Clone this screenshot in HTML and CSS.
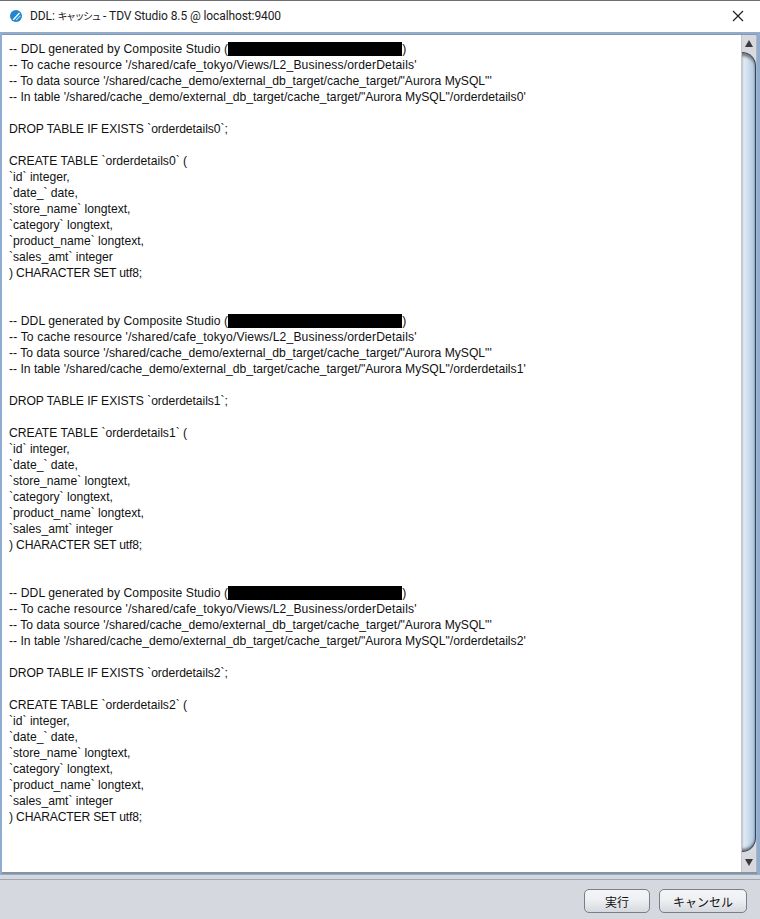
FILE: index.html
```html
<!DOCTYPE html>
<html lang="ja">
<head>
<meta charset="utf-8">
<title>DDL: キャッシュ - TDV Studio 8.5 @ localhost:9400</title>
<link rel="stylesheet" href="styles.css">
</head>
<body>
<div class="window">
  <header class="titlebar">
    <svg class="app-icon" width="16" height="16" viewBox="0 0 16 16" aria-hidden="true">
      <circle cx="8" cy="8" r="6" fill="#1f86cf"/>
      <path d="M4.5 11.5 L11 4.5 L12 5.5 L6 12 Z" fill="#ffffff"/>
      <path d="M7.5 12 L12.5 7 L12.5 8.2 L8.8 12.3 Z" fill="#bfe0f5"/>
    </svg>
    <span class="title-text">DDL: <span class="kana">キャッシュ</span> - TDV Studio 8.5 @ localhost:9400</span>
    <svg class="close-icon" width="12" height="12" viewBox="0 0 12 12" aria-hidden="true">
      <path d="M1 1 L11 11 M11 1 L1 11" stroke="#1a1a1a" stroke-width="1.1" fill="none"/>
    </svg>
  </header>
  <main class="editor-frame">
    <div class="editor">
<pre class="code"><span class="wide-s">-- DDL generated by Composite Studio (</span><span class="redact"></span>)
<span class="wide">-- To cache resource '/shared/cafe_tokyo/Views/L2_Business/orderDetails'</span>
-- To data source '/shared/cache_demo/external_db_target/cache_target/"Aurora MySQL"'
-- In table '/shared/cache_demo/external_db_target/cache_target/"Aurora MySQL"/orderdetails0'

<span class="tight-s">DROP TABLE IF EXISTS `orderdetails0`;</span>

CREATE TABLE `orderdetails0` (
`id` integer,
`date_` date,
`store_name` longtext,
`category` longtext,
`product_name` longtext,
`sales_amt` integer
<span class="tight">) CHARACTER SET utf8;</span>


<span class="wide-s">-- DDL generated by Composite Studio (</span><span class="redact"></span>)
<span class="wide">-- To cache resource '/shared/cafe_tokyo/Views/L2_Business/orderDetails'</span>
-- To data source '/shared/cache_demo/external_db_target/cache_target/"Aurora MySQL"'
-- In table '/shared/cache_demo/external_db_target/cache_target/"Aurora MySQL"/orderdetails1'

<span class="tight-s">DROP TABLE IF EXISTS `orderdetails1`;</span>

CREATE TABLE `orderdetails1` (
`id` integer,
`date_` date,
`store_name` longtext,
`category` longtext,
`product_name` longtext,
`sales_amt` integer
<span class="tight">) CHARACTER SET utf8;</span>


<span class="wide-s">-- DDL generated by Composite Studio (</span><span class="redact"></span>)
<span class="wide">-- To cache resource '/shared/cafe_tokyo/Views/L2_Business/orderDetails'</span>
-- To data source '/shared/cache_demo/external_db_target/cache_target/"Aurora MySQL"'
-- In table '/shared/cache_demo/external_db_target/cache_target/"Aurora MySQL"/orderdetails2'

<span class="tight-s">DROP TABLE IF EXISTS `orderdetails2`;</span>

CREATE TABLE `orderdetails2` (
`id` integer,
`date_` date,
`store_name` longtext,
`category` longtext,
`product_name` longtext,
`sales_amt` integer
<span class="tight">) CHARACTER SET utf8;</span></pre>
      <div class="scrollbar">
        <div class="scroll-btn"><span class="arrow-up"></span></div>
        <div class="thumb"></div>
        <div class="scroll-btn scroll-btn-down"><span class="arrow-down"></span></div>
      </div>
    </div>
  </main>
  <footer class="actions">
    <button class="btn btn-run" type="button">実行</button>
    <button class="btn btn-cancel" type="button">キャンセル</button>
  </footer>
</div>
</body>
</html>
```
FILE: styles.css
```css
* { box-sizing: border-box; }
html, body { margin: 0; padding: 0; height: 100%; }
body { background: #d6d8e0; overflow: hidden; }
.window {
  width: 760px;
  height: 919px;
  display: flex;
  flex-direction: column;
  background: #d6d8e0;
  font-family: "Liberation Sans", "Noto Sans CJK JP", sans-serif;
}
.titlebar {
  height: 32px;
  flex: none;
  display: flex;
  align-items: center;
  background: #fff;
  border-top: 1px solid #6f6f6f;
  padding: 0 16px 2px 8px;
}
.app-icon { flex: none; }
.title-text {
  margin-left: 6px;
  font-family: Roboto, "Noto Sans CJK JP", sans-serif;
  font-size: 12px;
  letter-spacing: -0.1px;
  color: #1b1b1b;
  flex: 1;
  white-space: nowrap;
}
.kana {
  font-family: "Noto Sans CJK JP", sans-serif;
  font-size: 10px;
  letter-spacing: -1.5px;
}
.close-icon { flex: none; }
.editor-frame {
  flex: none;
  height: 843px;
  background: #8fadd0;
  padding: 2px 3px 1px 2px;
}
.editor {
  height: 100%;
  display: flex;
  background: #fff;
  border-bottom: 2px solid #8c929c;
  border-top: 1px solid #8c98a8;
}
.code {
  flex: 1;
  margin: 0;
  padding: 6px 0 0 7px;
  font-family: "Liberation Sans", sans-serif;
  font-size: 12.15px;
  line-height: 16px;
  color: #111;
  overflow: hidden;
}
.wide { letter-spacing: 0.13px; }
.wide-s { letter-spacing: 0.08px; }
.tight { letter-spacing: -0.18px; }
.tight-s { letter-spacing: -0.07px; }
.redact {
  display: inline-block;
  width: 174px;
  height: 14px;
  background: #000;
  vertical-align: -3px;
}
.scrollbar {
  flex: none;
  width: 16px;
  display: flex;
  flex-direction: column;
  background: #d9dbe0;
  border-left: 1px solid #c4c6cb;
  border-right: 1px solid #b3b6bc;
}
.scroll-btn {
  height: 17px;
  flex: none;
  display: flex;
  align-items: center;
  justify-content: center;
  background: #d8d9de;
}
.scroll-btn-down { height: 20px; }
.arrow-up, .arrow-down {
  width: 0;
  height: 0;
  border-left: 4px solid transparent;
  border-right: 4px solid transparent;
}
.arrow-up { border-bottom: 7px solid #3a3a3a; }
.arrow-down { border-top: 7px solid #3a3a3a; }
.thumb {
  flex: 1;
  background: linear-gradient(90deg, #e8eef4 0%, #d5e3f0 35%, #b4cde4 85%, #a2bcd6 100%);
  border: 1px solid #33435a;
  border-left: none;
  border-radius: 0 14px 14px 0;
  box-shadow: 0 4px 3px -1px #777 inset, 0 -3px 3px -1px #6f7277 inset;
}
.actions {
  flex: 1;
  display: flex;
  justify-content: flex-end;
  align-items: flex-start;
  gap: 9px;
  padding: 9px 13px 0 0;
  margin-top: 4px;
  border-top: 1px solid #a5a6ad;
}
.btn {
  height: 24px;
  padding: 0;
  font-family: "Noto Sans CJK JP", sans-serif;
  font-size: 12px;
  color: #111;
  background: linear-gradient(180deg, #f4f5f7 0%, #eef0f3 45%, #d5d8de 100%);
  border: 1px solid #7c7e84;
  border-radius: 5px;
}
.btn-run { width: 66px; }
.btn-cancel { width: 88px; }
```
